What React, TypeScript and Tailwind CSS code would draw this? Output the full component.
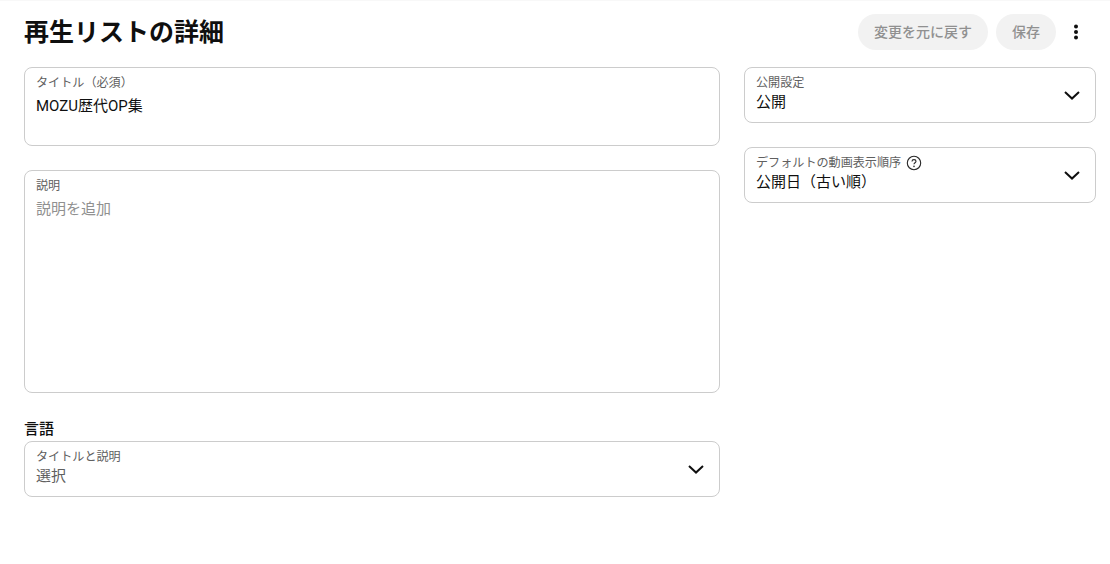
const font = { fontFamily: "Roboto, 'Noto Sans CJK JP', sans-serif" };

function Label({ children }: { children: React.ReactNode }) {
  return <div className="text-[12.1px] leading-[16px] text-[#606060]">{children}</div>;
}

function Chevron() {
  return (
    <svg width="24" height="24" viewBox="0 0 24 24" fill="none" stroke="#0f0f0f" strokeWidth="2">
      <path d="M5 9l7 6.6L19 9" />
    </svg>
  );
}

function SelectBox({
  label,
  value,
  muted,
}: {
  label: React.ReactNode;
  value: string;
  muted?: boolean;
}) {
  return (
    <div className="flex h-[56px] items-center justify-between rounded-[8px] border border-[#cccccc] px-[11px]">
      <div className="flex h-full flex-col pt-[7px]">
        <Label>{label}</Label>
        <div className={`text-[15px] leading-[22px] ${muted ? "text-[#606060]" : "text-[#0f0f0f]"}`}>
          {value}
        </div>
      </div>
      <Chevron />
    </div>
  );
}

export default function App() {
  return (
    <div className="h-[564px] w-[1110px] overflow-hidden bg-white" style={font}>
      <div className="h-[1px] bg-[#f8f8f8]" />
      <div className="pl-[24px] pr-[14px]">
        <div className="flex h-[62px] items-center justify-between">
          <h1 className="mt-[1px] text-[25px] font-bold leading-[32px] text-[#0f0f0f]">再生リストの詳細</h1>
          <div className="flex items-center">
            <button className="h-[36px] rounded-full bg-[#f2f2f2] px-[16px] text-[14px] font-medium text-[#909090]">
              変更を元に戻す
            </button>
            <button className="ml-[8px] h-[36px] rounded-full bg-[#f2f2f2] px-[16px] text-[14px] font-medium text-[#909090]">
              保存
            </button>
            <div className="flex h-[36px] w-[40px] items-center justify-center">
              <svg width="24" height="24" viewBox="0 0 24 24" fill="#0f0f0f">
                <circle cx="12" cy="6.5" r="2" />
                <circle cx="12" cy="12" r="2" />
                <circle cx="12" cy="17.5" r="2" />
              </svg>
            </div>
          </div>
        </div>
        <div className="mt-[4px] flex gap-[24px]">
          <div className="flex w-[696px] flex-col">
            <div className="h-[79px] rounded-[8px] border border-[#cccccc] px-[11px] pt-[7px]">
              <Label>タイトル（必須）</Label>
              <div className="mt-[4px] text-[15px] leading-[22px] text-[#0f0f0f]">MOZU歴代OP集</div>
            </div>
            <div className="mt-[24px] h-[223px] rounded-[8px] border border-[#cccccc] px-[11px] pt-[7px]">
              <Label>説明</Label>
              <div className="mt-[4px] text-[15px] leading-[22px] text-[#909090]">説明を追加</div>
            </div>
            <div className="mt-[24px] text-[15px] font-medium leading-[24px] text-[#0f0f0f]">言語</div>
            <SelectBox label="タイトルと説明" value="選択" muted />
          </div>
          <div className="flex w-[352px] flex-col gap-[24px]">
            <SelectBox label="公開設定" value="公開" />
            <SelectBox
              label={
                <span className="flex items-center gap-[5px]">
                  デフォルトの動画表示順序
                  <svg width="16" height="16" viewBox="0 0 16 16" fill="none" stroke="#282828" strokeWidth="1.1">
                    <circle cx="8" cy="8" r="6.7" />
                    <path d="M6 6.4c0-1.1.9-1.8 2-1.8s2 .7 2 1.7c0 1.4-2 1.5-2 3" />
                    <circle cx="8" cy="11.3" r=".3" fill="#282828" />
                  </svg>
                </span>
              }
              value="公開日（古い順）"
            />
          </div>
        </div>
      </div>
    </div>
  );
}
